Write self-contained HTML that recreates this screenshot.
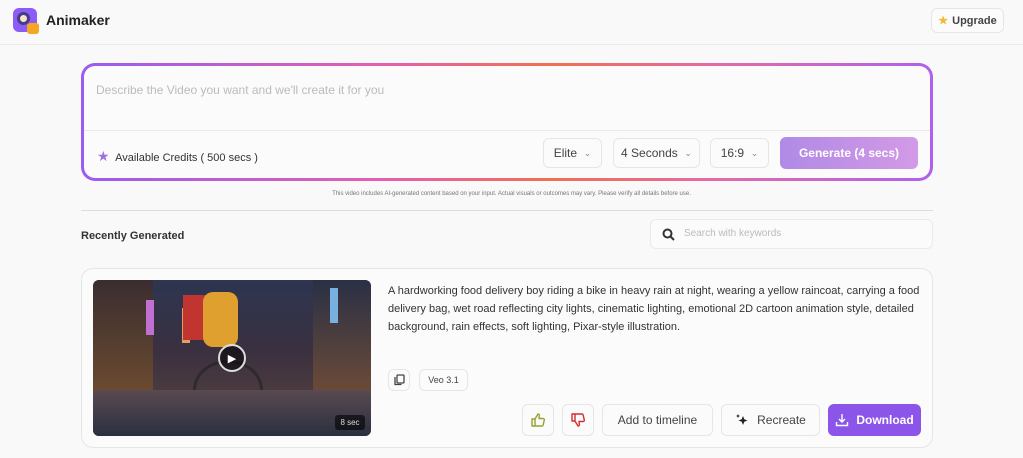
<!DOCTYPE html>
<html><head><meta charset="utf-8"><style>
*{box-sizing:border-box;margin:0;padding:0}
body{width:1023px;height:458px;overflow:hidden;background:#f9f9f9;font-family:"Liberation Sans",sans-serif;color:#333;position:relative}
.abs{position:absolute}
.btn{position:absolute;border:1px solid #e6e6e6;border-radius:6px;background:#fbfbfb;display:flex;align-items:center;justify-content:center;font-size:12px;color:#444}
</style></head><body>
<div class="abs" style="left:0;top:44px;width:1023px;height:1px;background:#ececec"></div>
<div class="abs" style="left:13px;top:8px;width:24px;height:24px;border-radius:6px;background:#8b5cf6"></div>
<div class="abs" style="left:17px;top:12px;width:13px;height:13px;border-radius:50%;background:#f5e6c8;border:3px solid #4a3a8a"></div>
<div class="abs" style="left:27px;top:23px;width:12px;height:11px;border-radius:3px;background:#f5a623"></div>
<div class="abs" style="left:46px;top:12px;font-size:14px;font-weight:bold;color:#222">Animaker</div>
<div class="btn" style="left:931px;top:8px;width:73px;height:25px;font-weight:bold;font-size:11px"><span style="color:#f5b82e;margin-right:4px">★</span>Upgrade</div>

<div class="abs" style="left:81px;top:63px;width:852px;height:118px;border-radius:14px;padding:3px;background:linear-gradient(90deg,#9b5cf0,#e35fb0 35%,#f07050 55%,#e36aa8 75%,#b060f0)">
 <div style="width:100%;height:100%;background:#fbfbfb;border-radius:11px;position:relative">
  <div class="abs" style="left:12px;top:17px;font-size:12px;color:#bbb">Describe the Video you want and we'll create it for you</div>
  <div class="abs" style="left:0;top:64px;width:100%;height:1px;background:#e8e8e8"></div>
  <div class="abs" style="left:13px;top:82px;font-size:11px;color:#333"><span style="color:#a070e0;font-size:14px">★</span>&nbsp; Available Credits ( 500 secs )</div>
 </div>
</div>
<div class="btn" style="left:543px;top:138px;width:59px;height:30px">Elite&nbsp;&nbsp;<span style="font-size:9px;color:#888">⌄</span></div>
<div class="btn" style="left:613px;top:138px;width:87px;height:30px">4 Seconds&nbsp;&nbsp;<span style="font-size:9px;color:#888">⌄</span></div>
<div class="btn" style="left:710px;top:138px;width:59px;height:30px">16:9&nbsp;&nbsp;<span style="font-size:9px;color:#888">⌄</span></div>
<div class="btn" style="left:780px;top:137px;width:138px;height:32px;border:none;background:linear-gradient(90deg,#b08ae6,#d39ae6);color:#fff;font-weight:bold">Generate (4 secs)</div>
<div class="abs" style="left:0;width:1023px;top:191px;text-align:center;font-size:6px;color:#777">This video includes AI-generated content based on your input. Actual visuals or outcomes may vary. Please verify all details before use.</div>
<div class="abs" style="left:81px;top:210px;width:852px;height:1px;background:#ddd"></div>
<div class="abs" style="left:81px;top:230px;font-size:11px;font-weight:bold;color:#333">Recently Generated</div>
<div class="abs" style="left:650px;top:219px;width:283px;height:30px;border:1px solid #eaeaea;border-radius:6px;background:#fbfbfb"></div>
<svg class="abs" style="left:662px;top:228px" width="13" height="13" viewBox="0 0 13 13"><circle cx="5.5" cy="5.5" r="4" fill="none" stroke="#333" stroke-width="2"/><path d="M8.5 8.5L12 12" stroke="#333" stroke-width="2"/></svg>
<div class="abs" style="left:684px;top:228px;font-size:10px;color:#bbb">Search with keywords</div>

<div class="abs" style="left:81px;top:268px;width:852px;height:180px;border:1px solid #e6e6e6;border-radius:12px;background:#fbfbfb"></div>
<div class="abs" style="left:93px;top:280px;width:278px;height:156px;border-radius:6px;overflow:hidden;background:linear-gradient(180deg,#2d3550 0%,#3a3040 45%,#4a3a40 70%,#2a3040 100%)">
 <div class="abs" style="left:0;top:0;width:60px;height:110px;background:linear-gradient(180deg,#3a2d30,#6a4a30)"></div>
 <div class="abs" style="left:220px;top:0;width:58px;height:110px;background:linear-gradient(180deg,#2a3045,#6a4a38)"></div>
 <div class="abs" style="left:53px;top:20px;width:8px;height:35px;background:#c070d0"></div>
 <div class="abs" style="left:89px;top:28px;width:8px;height:35px;background:#e0a060"></div>
 <div class="abs" style="left:237px;top:8px;width:8px;height:35px;background:#7ab0e0"></div>
 <div class="abs" style="left:90px;top:15px;width:35px;height:45px;background:#c03530"></div>
 <div class="abs" style="left:110px;top:12px;width:35px;height:55px;border-radius:10px;background:#e0a030"></div>
 <div class="abs" style="left:100px;top:80px;width:70px;height:60px;border:3px solid #222;border-radius:50%;opacity:.6"></div>
 <div class="abs" style="left:0;top:110px;width:278px;height:46px;background:linear-gradient(180deg,#5a4a50,#2a3040)"></div>
 <div class="abs" style="left:125px;top:64px;width:28px;height:28px;border-radius:50%;background:rgba(0,0,0,.5);border:2px solid #ddd;color:#fff;font-size:11px;display:flex;align-items:center;justify-content:center">▶</div>
 <div class="abs" style="left:242px;top:135px;width:30px;height:15px;background:rgba(0,0,0,.6);border-radius:3px;color:#ddd;font-size:8px;text-align:center;line-height:15px">8 sec</div>
</div>
<div class="abs" style="left:388px;top:282px;width:540px;font-size:11px;line-height:18px;color:#333">A hardworking food delivery boy riding a bike in heavy rain at night, wearing a yellow raincoat, carrying a food delivery bag, wet road reflecting city lights, cinematic lighting, emotional 2D cartoon animation style, detailed background, rain effects, soft lighting, Pixar-style illustration.</div>
<div class="btn" style="left:388px;top:369px;width:22px;height:22px"><svg width="12" height="12" viewBox="0 0 12 12"><rect x="4" y="1" width="7" height="8" rx="1" fill="none" stroke="#444" stroke-width="1.3"/><path d="M2 3v7.5h6.5" fill="none" stroke="#444" stroke-width="1.3"/></svg></div>
<div class="btn" style="left:419px;top:369px;width:49px;height:22px;font-size:9px">Veo 3.1</div>
<div class="btn" style="left:522px;top:404px;width:32px;height:32px"><svg width="16" height="16" viewBox="0 0 16 16"><path d="M2 7h3v7H2zM5 7l3-5c1.2 0 1.6 1 1.3 2L9 6.5h4c1 0 1.5.8 1.3 1.6l-1.2 5C12.9 13.6 12.4 14 12 14H5" fill="none" stroke="#9aa030" stroke-width="1.4" stroke-linejoin="round"/></svg></div>
<div class="btn" style="left:562px;top:404px;width:32px;height:32px"><svg width="16" height="16" viewBox="0 0 16 16"><path d="M2 2h3v7H2zM5 9l3 5c1.2 0 1.6-1 1.3-2L9 9.5h4c1 0 1.5-.8 1.3-1.6l-1.2-5C12.9 2.4 12.4 2 12 2H5" fill="none" stroke="#d03030" stroke-width="1.4" stroke-linejoin="round"/></svg></div>
<div class="btn" style="left:602px;top:404px;width:111px;height:32px">Add to timeline</div>
<div class="btn" style="left:721px;top:404px;width:99px;height:32px"><svg width="14" height="14" viewBox="0 0 14 14" style="margin-right:8px"><path d="M8 3l1.3 3.2L12.5 7.5 9.3 8.8 8 12 6.7 8.8 3.5 7.5 6.7 6.2z" fill="#222"/><path d="M3 1l.6 1.4L5 3l-1.4.6L3 5l-.6-1.4L1 3l1.4-.6z" fill="#222"/></svg>Recreate</div>
<div class="btn" style="left:828px;top:404px;width:93px;height:32px;border:none;background:#8b55ea;color:#fff;font-weight:bold"><svg width="14" height="14" viewBox="0 0 14 14" style="margin-right:7px"><path d="M7 1v8M4 6l3 3 3-3M1.5 9v3.5h11V9" fill="none" stroke="#fff" stroke-width="1.4"/></svg>Download</div>
</body></html>
